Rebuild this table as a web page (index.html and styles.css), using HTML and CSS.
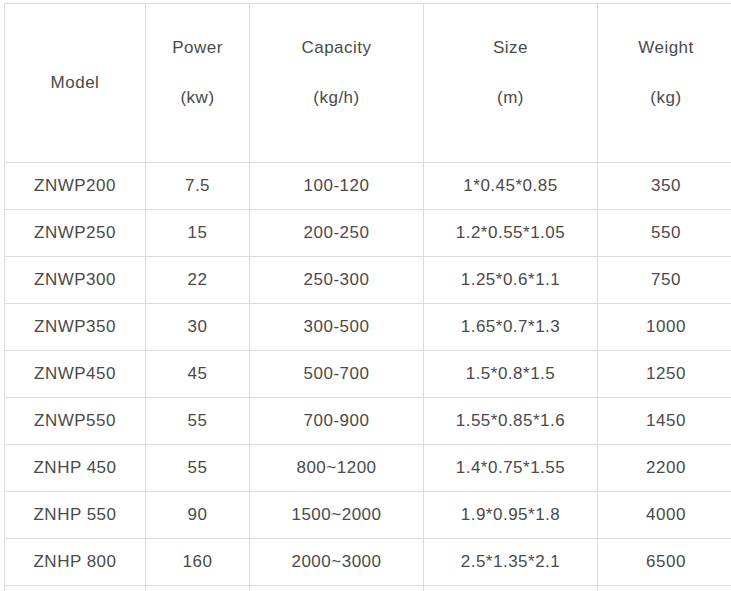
FILE: index.html
```html
<!DOCTYPE html>
<html>
<head>
<meta charset="utf-8">
<link rel="stylesheet" href="styles.css">
</head>
<body>
<div class="wrap">
<table class="spec">
<colgroup>
<col class="c1"><col class="c2"><col class="c3"><col class="c4"><col class="c5">
</colgroup>
<thead>
<tr>
<th class="single">Model</th>
<th><span class="l">Power</span><span class="l gap"></span><span class="l">(kw)</span></th>
<th><span class="l">Capacity</span><span class="l gap"></span><span class="l">(kg/h)</span></th>
<th><span class="l">Size</span><span class="l gap"></span><span class="l">(m)</span></th>
<th><span class="l">Weight</span><span class="l gap"></span><span class="l">(kg)</span></th>
</tr>
</thead>
<tbody>
<tr><td>ZNWP200</td><td>7.5</td><td>100-120</td><td>1*0.45*0.85</td><td>350</td></tr>
<tr><td>ZNWP250</td><td>15</td><td>200-250</td><td>1.2*0.55*1.05</td><td>550</td></tr>
<tr><td>ZNWP300</td><td>22</td><td>250-300</td><td>1.25*0.6*1.1</td><td>750</td></tr>
<tr><td>ZNWP350</td><td>30</td><td>300-500</td><td>1.65*0.7*1.3</td><td>1000</td></tr>
<tr><td>ZNWP450</td><td>45</td><td>500-700</td><td>1.5*0.8*1.5</td><td>1250</td></tr>
<tr><td>ZNWP550</td><td>55</td><td>700-900</td><td>1.55*0.85*1.6</td><td>1450</td></tr>
<tr><td>ZNHP 450</td><td>55</td><td>800~1200</td><td>1.4*0.75*1.55</td><td>2200</td></tr>
<tr><td>ZNHP 550</td><td>90</td><td>1500~2000</td><td>1.9*0.95*1.8</td><td>4000</td></tr>
<tr><td>ZNHP 800</td><td>160</td><td>2000~3000</td><td>2.5*1.35*2.1</td><td>6500</td></tr>
<tr><td>&nbsp;</td><td></td><td></td><td></td><td></td></tr>
</tbody>
</table>
</div>
</body>
</html>
```
FILE: styles.css
```css
html, body {
  margin: 0;
  padding: 0;
  background: #fff;
  overflow: hidden;
}
.wrap {
  padding: 3px 0 0 4px;
  width: 740px;
}
.spec {
  border-collapse: collapse;
  table-layout: fixed;
  width: 730px;
  font-family: "Liberation Sans", Arial, sans-serif;
  font-size: 17px;
  letter-spacing: 0.5px;
  color: #4a4a4a;
}
.c1 { width: 141px; }
.c2 { width: 104px; }
.c3 { width: 174px; }
.c4 { width: 174px; }
.c5 { width: 137px; }
.spec th, .spec td {
  border: 1px solid #dcdcdc;
  text-align: center;
  padding: 0;
  font-weight: normal;
}
.spec th {
  height: 159px;
  vertical-align: top;
  padding-top: 31px;
  box-sizing: border-box;
}
.spec th.single {
  vertical-align: middle;
  padding-top: 0;
}
.l {
  display: block;
  line-height: 25px;
  height: 25px;
}
.spec td {
  height: 46px;
  line-height: 46px;
}
```
